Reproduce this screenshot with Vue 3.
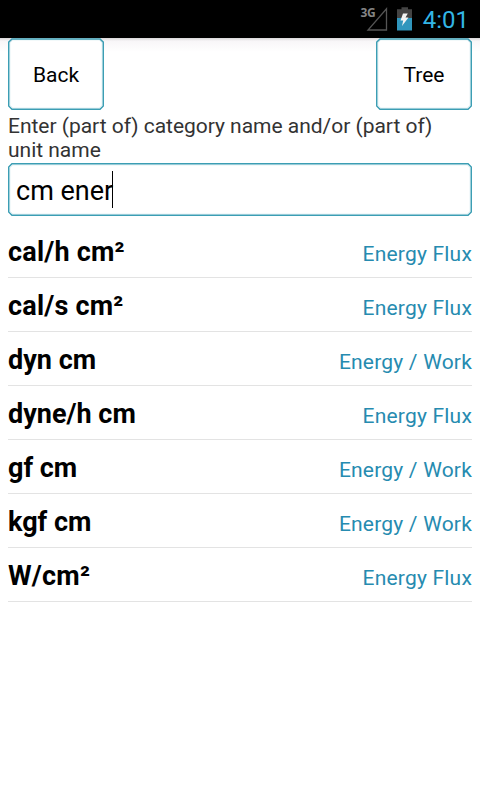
<script setup>
const units = [
  { name: 'cal/h cm²', category: 'Energy Flux' },
  { name: 'cal/s cm²', category: 'Energy Flux' },
  { name: 'dyn cm', category: 'Energy / Work' },
  { name: 'dyne/h cm', category: 'Energy Flux' },
  { name: 'gf cm', category: 'Energy / Work' },
  { name: 'kgf cm', category: 'Energy / Work' },
  { name: 'W/cm²', category: 'Energy Flux' },
]
</script>

<template>
  <div class="screen">
    <header class="status">
      <svg class="signal" width="28" height="34" viewBox="0 -4 28 34">
        <text x="0.500" y="11" class="network">3G</text>
        <path d="M26.500 2.800V24H8Z" fill="none" stroke="#555" stroke-width="1.300" />
      </svg>
      <svg class="battery" width="15" height="25" viewBox="0 0 15 25">
        <path d="M4.500 .2h6.500v2h4V12H0V2.200h4.500z" fill="#444" />
        <path d="M0 11h15V23.500H0z" fill="#3096bd" />
        <path d="M6 6.500h4.800L8.500 10.500h3L5 19l1.200-5.500H3.500z" fill="#f4f4f4" />
      </svg>
      <span class="clock">4:01</span>
    </header>

    <main>
      <div class="toolbar">
        <button class="btn">
          <svg class="frame" width="96" height="72" viewBox="0 0 96 72">
            <path class="halo" d="M5 2H91L94 5V67L91 70H5L2 67V5Z" />
            <path class="edge" d="M4 .9H92L95.300 4.200V68L92 71.300H4L.7 68V4.200Z" />
          </svg>
          <span>Back</span>
        </button>
        <button class="btn">
          <svg class="frame" width="96" height="72" viewBox="0 0 96 72">
            <path class="halo" d="M5 2H91L94 5V67L91 70H5L2 67V5Z" />
            <path class="edge" d="M4 .9H92L95.300 4.200V68L92 71.300H4L.7 68V4.200Z" />
          </svg>
          <span>Tree</span>
        </button>
      </div>
      <p class="hint">Enter (part of) category name and/or (part of)<br />unit name</p>
      <div class="field">
        <svg class="frame" width="464" height="53" viewBox="0 0 464 53">
          <path class="halo" d="M5 2H459L462 5V48L459 51H5L2 48V5Z" />
          <path class="edge" d="M4 .7H460L463.300 4V49L460 52.300H4L.7 49V4Z" />
        </svg>
        <span class="query">cm ener</span><i class="caret"></i>
      </div>
      <ul class="list">
        <li v-for="u in units" :key="u.name">
          <strong :class="{ squared: u.name.endsWith('²') }">{{ u.name }}</strong>
          <span>{{ u.category }}</span>
        </li>
      </ul>
    </main>
  </div>
</template>

<style>
body { background: #fff; }
</style>

<style scoped>
.screen {
  width: 480px;
  height: 800px;
  overflow: hidden;
  background: #fff;
  color: #000;
  font-family: Roboto, sans-serif;
}
.status {
  height: 38px;
  box-sizing: border-box;
  padding: 0 11px 0 0;
  background: #000;
  display: flex;
  justify-content: flex-end;
  align-items: center;
}
.signal { margin-right: 9px; }
.network {
  font: bold 12px "Open Sans", sans-serif;
  letter-spacing: -0.4px;
  fill: #858585;
}
.battery { margin-right: 11px; }
.clock {
  color: #33b5e5;
  font-size: 24px;
  line-height: 38px;
  padding-top: 1px;
  height: 38px;
  box-sizing: border-box;
}
main {
  padding: 0 8px;
  background: linear-gradient(#d8d6d8, #f8f6f8 3px, #fff 14px);
}
.toolbar {
  display: flex;
  justify-content: space-between;
  height: 76px;
}
.btn {
  position: relative;
  width: 96px;
  height: 72px;
  padding: 2px 0 0;
  border: 0;
  background: none;
  color: #000;
  font: 21px/70px Roboto, sans-serif;
}
.btn span { position: relative; }
.frame {
  position: absolute;
  left: 0;
  top: 0;
}
.edge {
  fill: none;
  stroke: #3c9eb4;
  stroke-width: 1.5;
}
.halo {
  fill: #fff;
  stroke: #e6f3f6;
  stroke-width: 1;
}
.hint {
  margin: 0;
  height: 49px;
  color: #333;
  font-size: 21px;
  line-height: 24px;
  letter-spacing: -0.02px;
  white-space: nowrap;
}
.field {
  position: relative;
  display: flex;
  align-items: center;
  box-sizing: border-box;
  height: 53px;
  padding-left: 8px;
  font-size: 27px;
}
.query {
  position: relative;
  padding-top: 2px;
}
.caret {
  position: relative;
  width: 1px;
  height: 37px;
  margin-left: -1px;
  background: #000;
}
.list {
  margin: 0;
  padding: 8px 0 0;
  list-style: none;
}
.list li {
  display: flex;
  justify-content: space-between;
  align-items: baseline;
  box-sizing: border-box;
  height: 54px;
  padding-top: 1px;
  border-bottom: 1px solid #e3e3e3;
  line-height: 54px;
}
.list strong {
  font-size: 27px;
  font-weight: 700;
}
.list .squared { letter-spacing: 0.2px; }
.list span {
  color: #268bb0;
  font-size: 21px;
  letter-spacing: 0.2px;
}
</style>
